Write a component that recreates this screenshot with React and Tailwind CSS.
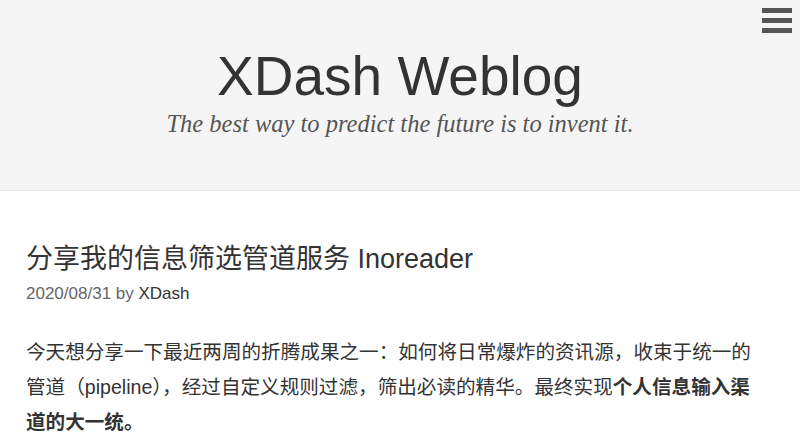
import React from 'react';

const sans = { fontFamily: '"Liberation Sans", "Noto Sans CJK SC", sans-serif' };

export default function App() {
  return (
    <div className="min-h-screen bg-white text-[#333]" style={sans}>
      <header className="relative bg-[#f5f5f5] border-b border-[#ebebeb] h-[191px] pt-[44px] text-center">
        <button className="absolute top-[8px] right-[8px] flex flex-col gap-[5px]" aria-label="menu">
          <span className="block w-[30px] h-[5px] bg-[#555]"></span>
          <span className="block w-[30px] h-[5px] bg-[#555]"></span>
          <span className="block w-[30px] h-[5px] bg-[#555]"></span>
        </button>
        <h1 className="text-[55px] leading-[64px] text-[#333]">XDash Weblog</h1>
        <p className="mt-[1px] text-[24.5px] leading-[30px] italic text-[#555]" style={{ fontFamily: '"Liberation Serif", "DejaVu Serif", serif' }}>
          The best way to predict the future is to invent it.
        </p>
      </header>

      <main className="pl-[26px] pr-[34px] pt-[50px]">
        <h2 className="text-[27px] leading-[36px] text-[#333]">分享我的信息筛选管道服务 Inoreader</h2>
        <div className="mt-[6px] text-[17px] leading-[22px] text-[#666]">
          2020/08/31 by <a className="text-[#333]">XDash</a>
        </div>
        <p className="mt-[30px] text-[19.6px] leading-[35px] text-[#333]">
          今天想分享一下最近两周的折腾成果之一：如何将日常爆炸的资讯源，收束于统一的管道（pipeline），经过自定义规则过滤，筛出必读的精华。最终实现<strong className="font-bold">个人信息输入渠道的大一统。</strong>
        </p>
      </main>
    </div>
  );
}
